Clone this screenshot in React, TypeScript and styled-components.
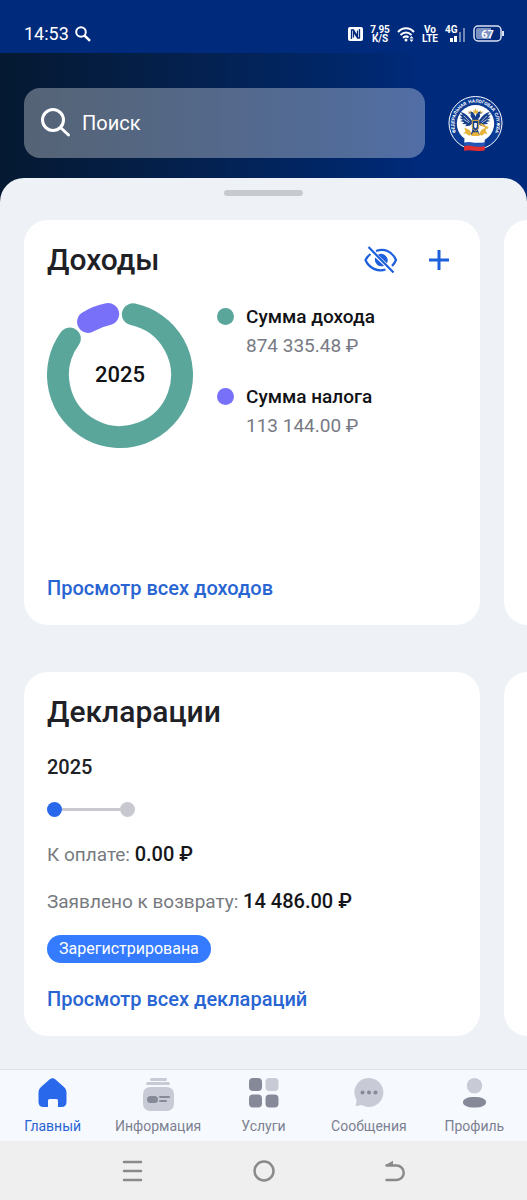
import React from 'react';
import styled, { createGlobalStyle } from 'styled-components';

const GlobalStyle = createGlobalStyle`
  * { box-sizing: border-box; }
  body { margin: 0; background: #eef2f7; }
  body, button, input { font-family: Roboto, "Liberation Sans", sans-serif; }
  h1, h2, h3, p, dl, dt, dd { margin: 0; }
  svg { display: block; flex: none; }
`;

const Shell = styled.div`
  display: flex;
  flex-direction: column;
  min-height: 100vh;
  background: linear-gradient(90deg, #051931 0%, #042150 38%, #00276a 66%, #002a7c 80%);
`;

const StatusBar = styled.div`
  display: flex;
  align-items: center;
  justify-content: space-between;
  height: 53px;
  padding: 14px 22px 0 24px;
  background: #002a7c;
  color: #fff;
`;

const Clock = styled.div`
  display: flex;
  align-items: center;
  gap: 6px;
  font-size: 18px;
  line-height: 20px;
`;

const StatusIcons = styled.div`
  display: flex;
  align-items: center;
  gap: 7px;
`;

const TinyStack = styled.span`
  display: flex;
  flex-direction: column;
  align-items: center;
  font-size: 10px;
  line-height: 9px;
  font-weight: 700;
`;

const Header = styled.header`
  display: flex;
  align-items: center;
  gap: 23px;
  padding: 35px 24px 20px;
`;

const SearchBox = styled.label`
  display: flex;
  flex: 1;
  align-items: center;
  gap: 11px;
  min-width: 0;
  height: 70px;
  padding: 0 17px;
  border-radius: 16px;
  background: rgba(255, 255, 255, 0.32);
`;

const SearchInput = styled.input`
  flex: 1;
  min-width: 0;
  padding: 0;
  border: 0;
  outline: 0;
  background: transparent;
  color: #fff;
  font-size: 20px;
  line-height: 28px;
  &::placeholder { color: #fff; opacity: 1; }
`;

const EmblemButton = styled.button`
  padding: 0;
  border: 0;
  background: none;
`;

const Sheet = styled.main`
  display: flex;
  flex: 1;
  flex-direction: column;
  padding-bottom: 33px;
  border-radius: 24px 24px 0 0;
  background: #eef2f7;
`;

const Handle = styled.div`
  align-self: center;
  width: 79px;
  height: 6px;
  margin: 12px 0 24px;
  border-radius: 3px;
  background: #c8c9cd;
`;

const Carousel = styled.section`
  display: flex;
  gap: 24px;
  padding-left: 24px;
  overflow: hidden;
  & + & { margin-top: 47px; }
`;

const Card = styled.article<{ $height: number }>`
  display: flex;
  flex: none;
  flex-direction: column;
  align-items: stretch;
  width: calc(100% - 47px);
  min-height: ${(p) => p.$height}px;
  padding: 20px 24px 23px 23px;
  border-radius: 24px;
  background: #fff;
`;

const CardHead = styled.div`
  display: flex;
  align-items: center;
  height: 40px;
`;

const CardTitle = styled.h2`
  flex: 1;
  color: #202126;
  font-size: 30px;
  line-height: 40px;
  font-weight: 500;
`;

const IconButton = styled.button`
  display: grid;
  place-items: center;
  width: 34px;
  height: 40px;
  margin-left: 24px;
  padding: 0;
  border: 0;
  background: none;
  color: #1d5fdc;
`;

const Income = styled.div`
  display: flex;
  gap: 24px;
  margin-top: 22px;
`;

const Legend = styled.dl`
  display: flex;
  flex-direction: column;
  gap: 22px;
`;

const LegendItem = styled.div<{ $color: string }>`
  display: grid;
  grid-template-columns: 17px auto;
  column-gap: 12px;
  align-items: center;
  font-size: 19px;
  line-height: 29px;
  &::before {
    content: '';
    width: 17px;
    height: 17px;
    border-radius: 50%;
    background: ${(p) => p.$color};
  }
`;

const LegendLabel = styled.dt`
  color: #111216;
  font-weight: 500;
`;

const LegendValue = styled.dd`
  grid-column: 2;
  color: #777a84;
`;

const CardLink = styled.a`
  align-self: flex-start;
  margin-top: auto;
  color: #2864d2;
  font-size: 20px;
  line-height: 28px;
  font-weight: 500;
  text-decoration: none;
`;

const Declaration = styled.div`
  display: flex;
  flex-direction: column;
  align-items: flex-start;
  gap: 20px;
  margin-top: 21px;
`;

const Year = styled.h3`
  color: #202126;
  font-size: 20px;
  line-height: 28px;
  font-weight: 500;
`;

const Steps = styled.div`
  display: flex;
  align-items: center;
  height: 16px;
  margin-bottom: 4px;
`;

const Step = styled.span<{ $active?: boolean }>`
  width: 15px;
  height: 15px;
  border-radius: 50%;
  background: ${(p) => (p.$active ? '#2968eb' : '#c8c9d0')};
`;

const StepLine = styled.span`
  width: 58px;
  height: 3px;
  background: #c8c9d0;
`;

const Amount = styled.p`
  height: 27px;
  color: #777a80;
  font-size: 19px;
  line-height: 27px;
`;

const AmountValue = styled.strong`
  color: #15161a;
  font-size: 20px;
  line-height: 20px;
  font-weight: 500;
`;

const Badge = styled.span`
  padding: 0 12px;
  border-radius: 14px;
  background: #347bff;
  color: #fff;
  font-size: 16px;
  line-height: 28px;
`;

const TabBar = styled.nav`
  display: grid;
  grid-template-columns: repeat(5, 1fr);
  height: 72px;
  border-top: 1px solid #dde1e8;
  background: #f6faff;
`;

const Tab = styled.a<{ $active?: boolean }>`
  display: flex;
  flex-direction: column;
  align-items: center;
  gap: 4px;
  padding-top: 8px;
  color: ${(p) => (p.$active ? '#2864d2' : '#7d8090')};
  font-size: 14px;
  line-height: 20px;
  text-decoration: none;
`;

const SystemBar = styled.div`
  display: flex;
  justify-content: space-around;
  align-items: center;
  height: 59px;
  padding: 0 12.5%;
  background: #efefef;
`;

const SystemButton = styled.button`
  padding: 0;
  border: 0;
  background: none;
  color: #8a8a8a;
`;

const arc = (from: number, to: number) => {
  const point = (deg: number) => {
    const a = (deg * Math.PI) / 180;
    return `${73 + 62 * Math.sin(a)} ${73 - 62 * Math.cos(a)}`;
  };
  return `M${point(from)}A62 62 0 ${to - from > 180 ? 1 : 0} 1 ${point(to)}`;
};

const Donut = () => (
  <svg width="146" height="146" viewBox="0 0 146 146" role="img" aria-label="2025">
    <g fill="none" strokeWidth="22" strokeLinecap="round">
      <path d={arc(12, 306)} stroke="#5aa69b" />
      <path d={arc(-31, -11)} stroke="#7870f8" />
    </g>
    <text x="73" y="80" textAnchor="middle" fontSize="22" fontWeight="500" fill="#111216">2025</text>
  </svg>
);

const Emblem = () => (
  <svg width="55" height="57" viewBox="0 0 168 171">
    <defs>
      <path id="ring" d="M34 128A65 65 0 1 1 134 128" />
    </defs>
    <circle cx="84" cy="84" r="81" fill="#0b3b94" stroke="#fff" strokeWidth="3" />
    <circle cx="84" cy="86" r="57" fill="#fff" />
    <text fontSize="14" fontWeight="700" fill="#fff">
      <textPath href="#ring" startOffset="50%" textAnchor="middle">{'ФЕДЕРАЛЬНАЯ\u00a0\u00a0НАЛОГОВАЯ\u00a0\u00a0СЛУЖБА'}</textPath>
    </text>
    <g fill="#173f8c">
      <path d="M81 58c-4-10-15-12-19-4l9 2c-4 4-3 10 3 14v8L61 63c-6-7-14-12-23-13l7 9-10-1 9 9-9 1 11 7-9 3 13 4-7 5 14 1-5 6 14-2 8-6v22l-6 12h30l-6-12V86l8 6 14 2-5-6 14-1-7-5 13-4-9-3 11-7-9-1 9-9-10 1 7-9c-9 1-17 6-23 13L93 78v-8c6-4 7-10 3-14l9-2c-4-8-15-6-19 4l-2 7z" />
    </g>
    <path d="M48 62l18 18M47 72l17 11M119 62l-18 18M121 72l-17 11" fill="none" stroke="#fff" strokeWidth="2" />
    <g fill="#e6b43c">
      <path d="M77 43l3 5 4-9 4 9 4-5-1 12H78zM62 47l3 3 4-5 1 8h-7zM106 47l-3 3-4-5-1 8h7z" />
      <path d="M50 98l17 8 5 12-8 5-10-8-8 3 7-9zM118 96l-17 10-6 12 8 5 10-8 8 3-6-10z" />
      <path d="M100 84l24 13-3 5-23-12z" />
      <path d="M76 112h16l5 12H71z" />
    </g>
    <path d="M74 76h20v20c0 7-6 10-10 12-4-2-10-5-10-12z" fill="#173f8c" stroke="#e6b43c" strokeWidth="3" />
    <path d="M80 84h8v12l-4 5-4-5z" fill="#fff" />
    <path d="M50 132c18-8 36 8 62-1v13H50z" fill="#fff" />
    <path d="M50 144c18-8 36 8 62-1v14H50z" fill="#2456b8" />
    <path d="M49 155c18-8 37 8 63-1v14c-22 5-42-5-63 1z" fill="#e12c30" />
  </svg>
);

const TABS = [
  {
    label: 'Главный',
    icon: (
      <path d="M13.500 1.500Q16.500 -1 19.500 1.500L28 9Q30.500 11 30.500 14V24Q30.500 29 25.500 29H22V22.500Q22 21 20.500 21H13.500Q12 21 12 22.500V29H7.500Q2.500 29 2.500 24V14Q2.500 11 5 9Z" fill="#2968eb" />
    ),
  },
  {
    label: 'Информация',
    icon: (
      <g>
        <g fill="#c8cbd6">
          <rect x="8" y="0" width="17" height="3" rx="1.500" />
          <rect x="4" y="4" width="24" height="3" rx="1.500" />
          <rect x="1" y="9" width="31" height="24" rx="7" />
        </g>
        <g fill="#858998">
          <rect x="5" y="18" width="11" height="7" rx="3.500" />
          <rect x="17" y="18" width="11" height="2" rx="1" />
          <rect x="17" y="22" width="8" height="2" rx="1" />
        </g>
      </g>
    ),
  },
  {
    label: 'Услуги',
    icon: (
      <g fill="#858998">
        <rect x="2" y="0" width="13" height="13" rx="4" />
        <rect x="18.500" y="0" width="13" height="13" rx="4" fill="#c8cbd6" />
        <rect x="2" y="16.500" width="13" height="13" rx="4" />
        <rect x="18.500" y="16.500" width="13" height="13" rx="4" />
      </g>
    ),
  },
  {
    label: 'Сообщения',
    icon: (
      <g>
        <path d="M17 0A14.500 14.500 0 1 1 9.500 27L5 28Q3 28.300 4 26.500L4.500 22A14.500 14.500 0 0 1 17 0Z" fill="#c8cbd6" />
        <g fill="#858998">
          <circle cx="10.500" cy="14.500" r="2" />
          <circle cx="17" cy="14.500" r="2" />
          <circle cx="23.500" cy="14.500" r="2" />
        </g>
      </g>
    ),
  },
  {
    label: 'Профиль',
    icon: (
      <g>
        <circle cx="16.500" cy="7.700" r="7.700" fill="#c8cbd6" />
        <path d="M16.500 19C24 19 28 21 28 24.200S24 29.500 16.500 29.500 5 27.400 5 24.200 9 19 16.500 19Z" fill="#858998" />
      </g>
    ),
  },
];

export default function App() {
  return (
    <Shell>
      <GlobalStyle />
      <StatusBar>
        <Clock>
          14:53
          <svg width="16" height="16" viewBox="0 0 16 16" fill="none" stroke="#fff">
            <circle cx="6" cy="6" r="4.800" strokeWidth="2" />
            <path d="M9.500 9.500L15 14.800" strokeWidth="2.500" />
          </svg>
        </Clock>
        <StatusIcons>
          <svg width="15" height="16" viewBox="0 0 15 16">
            <rect x="0" y="1" width="15" height="14" rx="2" fill="#fff" />
            <path d="M3.500 13V4H5.500L9.500 10.500V4.500M11.500 3V12H9.500L5.500 5.500V11.500" fill="none" stroke="#002a7c" strokeWidth="1.300" />
          </svg>
          <TinyStack><span>7,95</span><span>K/S</span></TinyStack>
          <svg width="18" height="16" viewBox="0 0 18 16" fill="none" stroke="#fff" strokeWidth="2">
            <path d="M1 6C5.500 1 12.500 1 17 6M3.500 9C7 5.500 11 5.500 14.500 9M6 11.800C8 10 10 10 11.500 11.500" />
            <circle cx="9" cy="14" r="1.500" fill="#fff" stroke="none" />
            <path d="M12.500 12.500l2-2.500 2 2.500zM12.500 13.500l2 2.500 2-2.500z" fill="#fff" stroke="none" />
          </svg>
          <TinyStack><span>Vo</span><span>LTE</span></TinyStack>
          <svg width="21" height="18" viewBox="0 0 21 18">
            <text x="0" y="8" fontSize="10" fontWeight="700" fill="#fff">4G</text>
            <path d="M5 13h3v4H5zM9 11h3v6H9z" fill="#fff" />
            <path d="M14 7h2v10h-2zM18 3h2v14h-2z" fill="#7187b6" />
          </svg>
          <svg width="32" height="18" viewBox="0 0 32 18">
            <rect x="1" y="1" width="27" height="15" rx="4" fill="none" stroke="#dbe2f1" strokeWidth="1.500" />
            <path d="M5 3h13v11H5q-2 0-2-2V5q0-2 2-2z" fill="#7d91c0" />
            <path d="M30 6v5" stroke="#dbe2f1" strokeWidth="2" />
            <text x="14.500" y="12.500" textAnchor="middle" fontSize="11" fontWeight="700" fill="#fff">67</text>
          </svg>
        </StatusIcons>
      </StatusBar>

      <Header>
        <SearchBox>
          <svg width="30" height="30" viewBox="0 0 30 30" fill="none" stroke="#fff" strokeWidth="3" strokeLinecap="round">
            <circle cx="12" cy="12" r="10.500" />
            <path d="M20 20l7.500 7" />
          </svg>
          <SearchInput type="search" placeholder="Поиск" aria-label="Поиск" />
        </SearchBox>
        <EmblemButton aria-label="Федеральная налоговая служба"><Emblem /></EmblemButton>
      </Header>

      <Sheet>
        <Handle />
        <Carousel>
          <Card $height={405}>
            <CardHead>
              <CardTitle>Доходы</CardTitle>
              <IconButton aria-label="Скрыть суммы">
                <svg width="34" height="28" viewBox="0 0 34 28" fill="none" stroke="currentColor" strokeWidth="2.200">
                  <path d="M12 5C20 2 28 5 32 14C31 16.500 29.500 18.500 28 20" />
                  <path d="M6.500 8C4 10 2.500 12 1.500 14C5 22.500 14 26 21.500 23.500" />
                  <path d="M14 8.700A6.500 6.500 0 0 1 23 17.200ZM11.300 11.500A6.500 6.500 0 0 0 20 19.700Z" fill="currentColor" stroke="none" />
                  <path d="M4.500 1L29.500 26.500" />
                </svg>
              </IconButton>
              <IconButton aria-label="Добавить">
                <svg width="22" height="22" viewBox="0 0 22 22" stroke="currentColor" strokeWidth="3">
                  <path d="M11 1v20M1 11h20" />
                </svg>
              </IconButton>
            </CardHead>
            <Income>
              <Donut />
              <Legend>
                <LegendItem $color="#5aa69b">
                  <LegendLabel>Сумма дохода</LegendLabel>
                  <LegendValue>874 335.48 ₽</LegendValue>
                </LegendItem>
                <LegendItem $color="#7870f8">
                  <LegendLabel>Сумма налога</LegendLabel>
                  <LegendValue>113 144.00 ₽</LegendValue>
                </LegendItem>
              </Legend>
            </Income>
            <CardLink href="#income">Просмотр всех доходов</CardLink>
          </Card>
          <Card $height={405} />
        </Carousel>

        <Carousel>
          <Card $height={364}>
            <CardHead>
              <CardTitle>Декларации</CardTitle>
            </CardHead>
            <Declaration>
              <Year>2025</Year>
              <Steps>
                <Step $active />
                <StepLine />
                <Step />
              </Steps>
              <Amount>К оплате: <AmountValue>0.00 ₽</AmountValue></Amount>
              <Amount>Заявлено к возврату: <AmountValue>14 486.00 ₽</AmountValue></Amount>
              <Badge>Зарегистрирована</Badge>
            </Declaration>
            <CardLink href="#declarations">Просмотр всех деклараций</CardLink>
          </Card>
          <Card $height={364} />
        </Carousel>
      </Sheet>

      <TabBar>
        {TABS.map((tab, i) => (
          <Tab key={tab.label} href="#" $active={i === 0}>
            <svg width="33" height="34" viewBox="0 0 33 34">{tab.icon}</svg>
            {tab.label}
          </Tab>
        ))}
      </TabBar>
      <SystemBar>
        <SystemButton aria-label="Меню">
          <svg width="22" height="22" viewBox="0 0 22 22" stroke="currentColor" strokeWidth="2.500" strokeLinecap="round">
            <path d="M3 2h17M3 11h17M3 20h17" />
          </svg>
        </SystemButton>
        <SystemButton aria-label="Домой">
          <svg width="22" height="22" viewBox="0 0 22 22" fill="none" stroke="currentColor" strokeWidth="2.500">
            <circle cx="11" cy="11" r="9.500" />
          </svg>
        </SystemButton>
        <SystemButton aria-label="Назад">
          <svg width="22" height="22" viewBox="0 0 22 22" fill="none" stroke="currentColor" strokeWidth="2.500" strokeLinecap="round">
            <path d="M2.500 5.500H12.500A7.200 7.200 0 0 1 12.500 20H2.500" />
            <path d="M1.500 5L9 .8V5Z" fill="currentColor" stroke="none" />
          </svg>
        </SystemButton>
      </SystemBar>
    </Shell>
  );
}
